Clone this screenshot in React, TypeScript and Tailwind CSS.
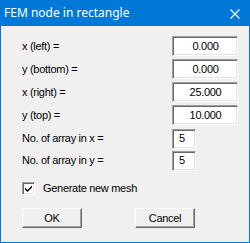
const rows = [
  { label: "x (left) =", value: "0.000" },
  { label: "y (bottom) =", value: "0.000" },
  { label: "x (right) =", value: "25.000" },
  { label: "y (top) =", value: "10.000" },
];

const counts = [
  { label: "No. of array in x =", value: "5" },
  { label: "No. of array in y =", value: "5" },
];

const sunken =
  "border border-t-[#a0a0a0] border-l-[#a0a0a0] border-b-[#ffffff] border-r-[#ffffff] shadow-[inset_1px_1px_0_#696969,inset_-1px_-1px_0_#e3e3e3] bg-white";

const raised =
  "border border-t-[#ffffff] border-l-[#ffffff] border-b-[#696969] border-r-[#696969] shadow-[inset_-1px_-1px_0_#a0a0a0] bg-[#f0f0f0]";

function Field({ value, wide }: { value: string; wide: boolean }) {
  return (
    <div
      className={`${sunken} h-[20px] flex items-center ${
        wide ? "w-[66px] justify-center pl-[1px]" : "w-[24px] pl-[6px]"
      }`}
    >
      {value}
    </div>
  );
}

function Button({ children }: { children: string }) {
  return (
    <button className={`${raised} w-[60px] h-[20px] flex items-center justify-center text-black`}>
      {children}
    </button>
  );
}

export default function App() {
  return (
    <div
      className="w-[250px] h-[243px] bg-[#f0f0f0] border border-t-0 border-[#0078d7] flex flex-col text-[11px] text-black"
      style={{ fontFamily: '"Liberation Sans", Arial, sans-serif' }}
    >
      <div className="h-[26px] -mx-px bg-[#0078d7] flex items-center justify-between pl-[4px] pr-[10px] shrink-0">
        <span
          className="text-white text-[12px] leading-none"
          style={{ fontFamily: '"Noto Sans", "Open Sans", sans-serif' }}
        >
          FEM node in rectangle
        </span>
        <svg width="10" height="10" viewBox="0 0 10 10" className="mt-[1px]">
          <path d="M0.5 0.5 L9.5 9.5 M9.5 0.5 L0.5 9.5" stroke="white" strokeWidth="1.1" />
        </svg>
      </div>

      <div className="flex flex-col pl-[21px] pt-[10px] gap-[3px] tracking-[-0.3px]">
        {rows.map((r) => (
          <div key={r.label} className="flex items-center h-[20px]">
            <span className="w-[150px]">{r.label}</span>
            <Field value={r.value} wide />
          </div>
        ))}
        <div className="flex flex-col gap-[3px] mt-[1px]">
          {counts.map((r) => (
            <div key={r.label} className="flex items-center h-[19px]">
              <span className="w-[150px]">{r.label}</span>
              <Field value={r.value} wide={false} />
            </div>
          ))}
        </div>

        <div className="flex items-center mt-[9px] h-[13px]">
          <div className={`${sunken} w-[13px] h-[13px] flex items-center justify-center`}>
            <svg width="9" height="9" viewBox="0 0 9 9">
              <path d="M1 3.5 L3.5 6 L8 1.5 L8 3.5 L3.5 8 L1 5.5 Z" fill="black" />
            </svg>
          </div>
          <span className="ml-[8px]">Generate new mesh</span>
        </div>

        <div className="flex items-center gap-[53px] mt-[10px]">
          <Button>OK</Button>
          <Button>Cancel</Button>
        </div>
      </div>
    </div>
  );
}
